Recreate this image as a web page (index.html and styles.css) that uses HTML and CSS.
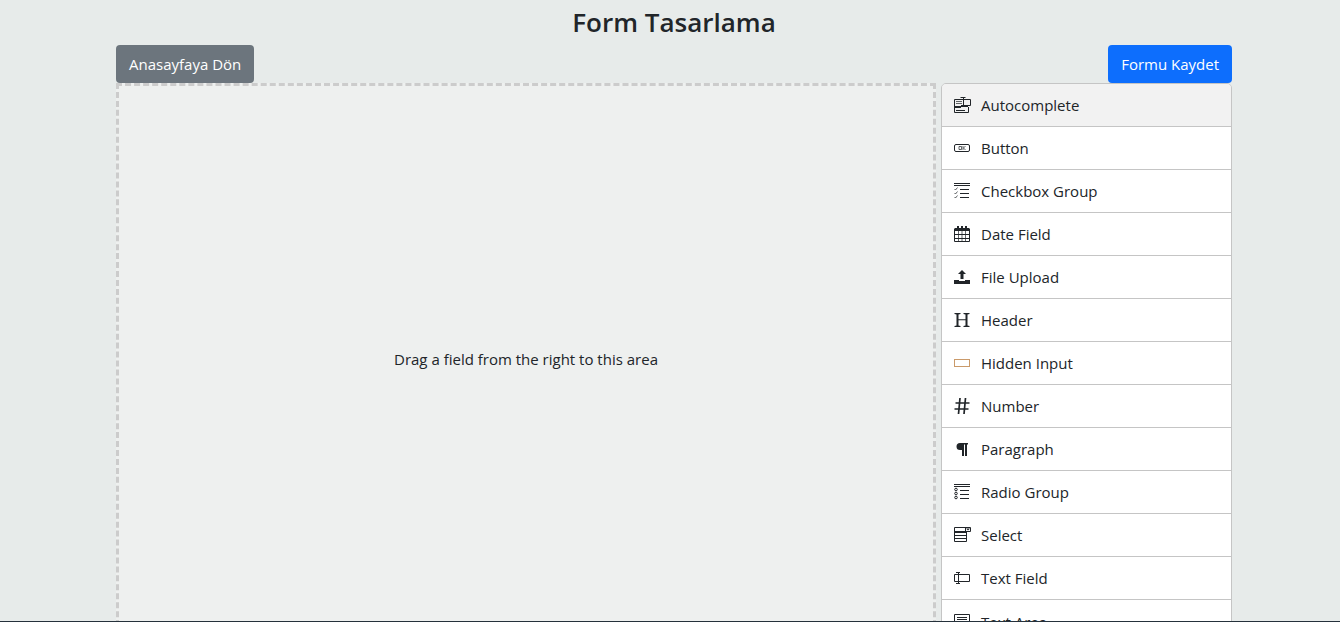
FILE: index.html
```html
<!DOCTYPE html>
<html lang="tr">
<head>
<meta charset="utf-8">
<title>Form Tasarlama</title>
<link rel="stylesheet" href="styles.css">
</head>
<body>
<main class="page">
  <h1 class="title">Form Tasarlama</h1>
  <div class="toolbar">
    <button type="button" class="btn btn-secondary">Anasayfaya Dön</button>
    <button type="button" class="btn btn-primary">Formu Kaydet</button>
  </div>
  <div class="builder">
    <section class="stage"><p class="hint">Drag a field from the right to this area</p></section>
    <ul class="controls">
      <li class="control active"><svg class="icon" viewBox="0 0 18 18"><path class="line" d="M10 3.500H1.500V16.500H15.500V11M10 3.500H17.500V9.500H10M7.500 1.500H12.500M10.500 2V9.500"/><path d="M2 10h6v-1h3v1h4v1H8v1H2z"/><path class="thin" d="M3 5.500H9M3 7.500H9"/><path class="line" d="M3 14.500H12"/></svg>Autocomplete</li>
      <li class="control"><svg class="icon" viewBox="0 0 18 18"><rect class="line" x="1.500" y="5.500" width="15" height="7" rx="1.500"/><path class="thin" d="M6 7.500h2.500v3H6zM10 7v4M12.500 7L10.500 9L12.500 11"/></svg>Button</li>
      <li class="control"><svg class="icon" viewBox="0 0 18 18"><path class="line" d="M1 1.500H17M1 3.500H17M7 7.500H16M7 11.500H16M7 15.500H16"/><path class="thin" d="M1.500 7L2.500 8L4.500 5.500M1.500 11L2.500 12L4.500 9.500M1.500 15L2.500 16L4.500 13.500"/></svg>Checkbox Group</li>
      <li class="control"><svg class="icon" viewBox="0 0 18 18"><path d="M1.500 3H4V1h2v2h2V1h2v2h2V1h2v2h2.500v3h-15z"/><path class="line" d="M1.500 4V16.500H16.500V4M2 9.500H16M2 13.500H16"/><path class="thin" d="M5.500 6V16M9 6V16M12.500 6V16"/></svg>Date Field</li>
      <li class="control"><svg class="icon" viewBox="0 0 18 18"><path d="M9 2L13 6H10.500V11H7.500V6H5zM1 12h5v1h6v-1h5v4H1z"/></svg>File Upload</li>
      <li class="control"><svg class="icon" viewBox="0 0 18 18"><path d="M1.500 2h6v1L5.500 3.400V8.200h7V3.400L10.500 3V2h6v1l-2 .4v11.200l2 .4v1h-6v-1l2-.4V9.300h-7v5.300l2 .4v1h-6v-1l2-.4V3.400l-2-.4z"/></svg>Header</li>
      <li class="control"><svg class="icon" viewBox="0 0 18 18"><rect class="tint" x="1.500" y="5.500" width="15" height="7"/><rect class="dotted" x="1.500" y="5.500" width="15" height="7"/></svg>Hidden Input</li>
      <li class="control"><svg class="icon" viewBox="0 0 18 18"><path class="bold" d="M7 1L5.500 17M12.500 1L11 17M2.500 6H16.500M1.500 12H15.500"/></svg>Number</li>
      <li class="control"><svg class="icon" viewBox="0 0 18 18"><path d="M7 3h8v1.500h-1V16h-2V4.500h-1V16H9v-6H7a3.500 3.500 0 0 1 0-7z"/></svg>Paragraph</li>
      <li class="control"><svg class="icon" viewBox="0 0 18 18"><path class="line" d="M1 1.500H17M1 3.500H17M7 7.500H16M7 11.500H16M7 15.500H16"/><g class="ring"><circle cx="3" cy="6.500" r="1.300"/><circle cx="3" cy="10.500" r="1.300"/><circle cx="3" cy="14.500" r="1.300"/></g></svg>Radio Group</li>
      <li class="control"><svg class="icon" viewBox="0 0 18 18"><path class="line" d="M1.500 1.500H17.500V5.500H1.500ZM12.500 1.500V5.500M1.500 4V15.500H13.500V5M2 9.500H13M2 12.500H13"/><path d="M1 5h12v2H1z"/><path d="M13 2.500h4l-2 2z"/></svg>Select</li>
      <li class="control"><svg class="icon" viewBox="0 0 18 18"><path class="line" d="M1.500 5.500H16.500V12.500H1.500ZM3 3.500H7M5.500 3.500V14.500M3 14.500H7"/></svg>Text Field</li>
      <li class="control"><svg class="icon" viewBox="0 0 18 18"><path class="line" d="M1.500 1.500H16.500V15.500H1.500ZM4 4.500H14M4 6.500H14M4 9.500H14"/></svg>Text Area</li>
    </ul>
  </div>
</main>
<div class="edge"></div>
</body>
</html>
```
FILE: styles.css
```css
* { box-sizing: border-box; }
body {
  margin: 0;
  background: #e7ebea;
  color: #212529;
  font: 15px/24px "Open Sans", "Noto Sans", sans-serif;
}
.page {
  height: 100vh;
  overflow: hidden;
  padding: 5px 108px 0 116px;
}
.title {
  margin: 0 0 6px;
  font-size: 26px;
  line-height: 34px;
  font-weight: 600;
  text-align: center;
}
.toolbar { display: flex; justify-content: space-between; }
.btn {
  height: 38px;
  padding: 0 12px;
  border: 1px solid transparent;
  border-radius: 4px;
  color: #fff;
  font: inherit;
}
.btn-secondary { background: #6c757d; }
.btn-primary { background: #0d6efd; }
.builder {
  display: grid;
  grid-template-columns: 820fr 291fr;
  gap: 5px;
}
.stage {
  display: flex;
  align-items: center;
  justify-content: center;
  padding-bottom: 10px;
  border: 3px dashed #ccc;
  background: #eef0ef;
}
.hint { margin: 0; }
.controls {
  margin: 0;
  padding: 0;
  list-style: none;
  border: 1px solid #c5c5c5;
  border-radius: 5px;
  overflow: hidden;
}
.control {
  display: flex;
  align-items: center;
  gap: 10px;
  height: 43px;
  padding: 0 11px;
  border-bottom: 1px solid #c5c5c5;
  background: #fff;
}
.control:last-child { border-bottom: 0; }
.active { background: #f2f2f2; }
.icon { width: 18px; height: 18px; flex: none; fill: #212529; }
.line, .thin, .bold, .ring, .tint, .dotted { fill: none; stroke: #212529; }
.thin { stroke-width: .7; }
.bold { stroke-width: 1.7; }
.tint { stroke: #e3b98c; }
.dotted { stroke: #b07a48; stroke-dasharray: 1 1; }
.edge {
  position: fixed;
  inset: auto 0 0;
  height: 1px;
  background: #25313b;
}
```
